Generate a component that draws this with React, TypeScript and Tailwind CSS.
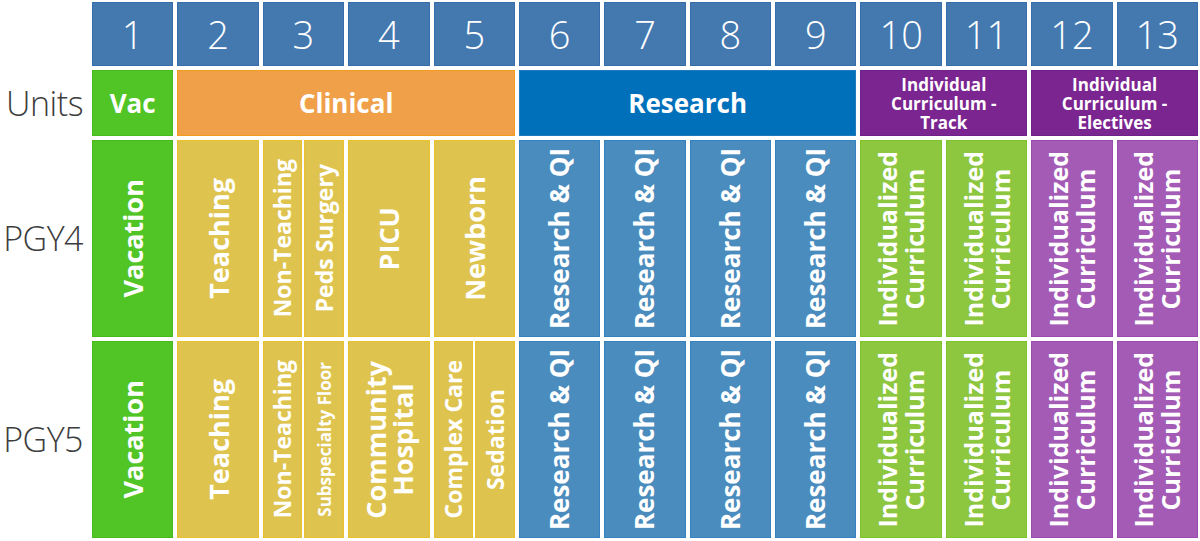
import React from 'react';

type Tone = 'vac' | 'yellow' | 'rq' | 'green' | 'purple';

const tones: Record<Tone, string> = {
  vac: 'bg-[#52c526] border-[#47bb1c]',
  yellow: 'bg-[#dec44f] border-[#e9c12c]',
  rq: 'bg-[#4a8cbd] border-[#3383c2]',
  green: 'bg-[#8dc63f] border-[#7cc428]',
  purple: 'bg-[#a45bb5] border-[#9a4bb0]',
};

// rotated label reading bottom to top
const VCell = ({
  tone,
  size = 'text-[27px]',
  children,
}: {
  tone: Tone;
  size?: string;
  children: React.ReactNode;
}) => (
  <div className={`flex items-center justify-center border ${tones[tone]} min-w-0`}>
    <span
      className={`[writing-mode:vertical-rl] rotate-180 text-center font-bold text-white leading-[27px] whitespace-nowrap ${size}`}
    >
      {children}
    </span>
  </div>
);

const Split = ({ children }: { children: React.ReactNode }) => (
  <div className="grid grid-cols-2 gap-[2px] min-w-0">{children}</div>
);

const RowLabel = ({ children }: { children: React.ReactNode }) => (
  <div className="flex items-center justify-end pr-[5px] text-[34px] font-light tracking-[-0.5px] text-[#3d3d3d] whitespace-nowrap">
    {children}
  </div>
);

const UnitCell = ({
  span,
  cls,
  children,
}: {
  span: string;
  cls: string;
  children: React.ReactNode;
}) => (
  <div className={`flex items-center justify-center border text-center font-bold text-white ${span} ${cls}`}>
    {children}
  </div>
);

const App: React.FC = () => {
  const blocks = Array.from({ length: 13 }, (_, i) => i + 1);
  const rq = [6, 7, 8, 9];

  const tail = (
    <>
      {rq.map((n) => (
        <VCell key={n} tone="rq" size="text-[26px]">
          Research &amp; QI
        </VCell>
      ))}
      <VCell tone="green" size="text-[25px]">
        Individualized
        <br />
        Curriculum
      </VCell>
      <VCell tone="green" size="text-[25px]">
        Individualized
        <br />
        Curriculum
      </VCell>
      <VCell tone="purple" size="text-[25px]">
        Individualized
        <br />
        Curriculum
      </VCell>
      <VCell tone="purple" size="text-[25px]">
        Individualized
        <br />
        Curriculum
      </VCell>
    </>
  );

  return (
    <div
      className="w-[1200px] h-[541px] bg-white pt-[2px] pr-[2px]"
      style={{ fontFamily: '"Open Sans", "Liberation Sans", sans-serif' }}
    >
      <div className="grid grid-cols-[88px_repeat(13,minmax(0,1fr))] grid-rows-[64px_66px_197px_197px] gap-[4px]">
        {/* block numbers */}
        <div />
        {blocks.map((n) => (
          <div
            key={n}
            className="flex items-center justify-center border border-[#366eab] bg-[#4479b0] text-[38px] font-light text-white"
          >
            {n}
          </div>
        ))}

        {/* units */}
        <RowLabel>Units</RowLabel>
        <UnitCell span="col-span-1" cls="bg-[#52c526] border-[#47bb1c] text-[26px]">
          Vac
        </UnitCell>
        <UnitCell span="col-span-4" cls="bg-[#f0a048] border-[#f49b1c] text-[26px]">
          Clinical
        </UnitCell>
        <UnitCell span="col-span-4" cls="bg-[#0070bb] border-[#1f7bc0] text-[26px]">
          Research
        </UnitCell>
        <UnitCell span="col-span-2" cls="bg-[#7b2590] border-[#70208a] text-[17px] leading-[19px]">
          Individual
          <br />
          Curriculum -
          <br />
          Track
        </UnitCell>
        <UnitCell span="col-span-2" cls="bg-[#7b2590] border-[#70208a] text-[17px] leading-[19px]">
          Individual
          <br />
          Curriculum -
          <br />
          Electives
        </UnitCell>

        {/* PGY4 */}
        <RowLabel>PGY4</RowLabel>
        <VCell tone="vac">Vacation</VCell>
        <VCell tone="yellow">Teaching</VCell>
        <Split>
          <VCell tone="yellow" size="text-[23px]">
            Non-Teaching
          </VCell>
          <VCell tone="yellow" size="text-[23px]">
            Peds Surgery
          </VCell>
        </Split>
        <VCell tone="yellow">PICU</VCell>
        <VCell tone="yellow">Newborn</VCell>
        {tail}

        {/* PGY5 */}
        <RowLabel>PGY5</RowLabel>
        <VCell tone="vac">Vacation</VCell>
        <VCell tone="yellow">Teaching</VCell>
        <Split>
          <VCell tone="yellow" size="text-[23px]">
            Non-Teaching
          </VCell>
          <VCell tone="yellow" size="text-[17px]">
            Subspecialty Floor
          </VCell>
        </Split>
        <VCell tone="yellow">
          Community
          <br />
          Hospital
        </VCell>
        <Split>
          <VCell tone="yellow" size="text-[23px]">
            Complex Care
          </VCell>
          <VCell tone="yellow" size="text-[23px]">
            Sedation
          </VCell>
        </Split>
        {tail}
      </div>
    </div>
  );
};

export default App;
